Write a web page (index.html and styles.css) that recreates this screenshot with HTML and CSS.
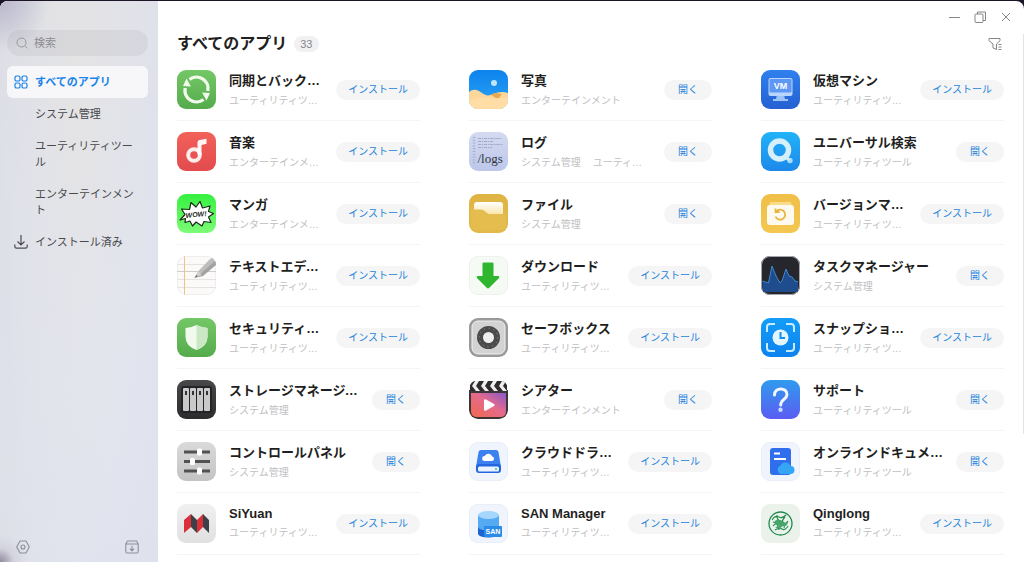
FILE: index.html
```html
<!DOCTYPE html>
<html lang="ja">

<head>
    <meta charset="UTF-8">
    <meta name="viewport" content="width=device-width, initial-scale=1.0">
    <title>すべてのアプリ</title>
    <link rel="stylesheet" href="styles.css">
</head>

<body>
    <div class="window">
        <!-- Sidebar -->
        <aside class="sidebar">
            <label class="search">
                <svg width="12" height="12" viewBox="0 0 12 12" fill="none" stroke="#97979c"><circle cx="5.5" cy="5.5" r="4.5"/><path d="M9 9l2.3 2.3"/></svg>
                <input type="search" placeholder="検索" aria-label="検索">
            </label>
            <nav class="menu">
                <a href="#all" class="menu-item active">
                    <svg width="14" height="14" viewBox="0 0 14 14" fill="none" stroke="#1a83e8" stroke-width="1.2"><rect x="1" y="1" width="5" height="5" rx="1.6"/><rect x="8" y="1" width="5" height="5" rx="1.6"/><rect x="1" y="8" width="5" height="5" rx="1.6"/><rect x="8" y="8" width="5" height="5" rx="1.6"/></svg>
                    <span>すべてのアプリ</span>
                </a>
                <a href="#system" class="menu-item sub">システム管理</a>
                <a href="#utility" class="menu-item sub">ユーティリティツール</a>
                <a href="#entertainment" class="menu-item sub">エンターテインメント</a>
                <a href="#installed" class="menu-item">
                    <svg width="14" height="14" viewBox="0 0 14 14" fill="none" stroke="#4c4c52" stroke-width="1.2"><path d="M7 0v9.5M3.5 6.5L7 10l3.500-3.500M.8 9.500v2q0 1.700 1.700 1.700h9q1.700 0 1.700-1.700v-2"/></svg>
                    <span>インストール済み</span>
                </a>
            </nav>
            <div class="sidebar-footer">
                <button class="icon-btn" aria-label="設定">
                    <svg width="14" height="14" viewBox="0 0 14 14" fill="none" stroke="#8e8e98" stroke-width="1.1"><path d="M4 1h6l3.300 6L10 13H4L.7 7z" stroke-linejoin="round"/><circle cx="7" cy="7" r="2"/></svg>
                </button>
                <button class="icon-btn" aria-label="手動インストール">
                    <svg width="14" height="14" viewBox="0 0 14 14" fill="none" stroke="#8e8e98" stroke-width="1.1"><path d="M2.500 1h9l1.700 3v7.500q0 1.500-1.500 1.500H2.300Q.8 13 .8 11.500V4zM.8 4h12.400M7 5.800v5M4.800 8.700L7 10.900l2.200-2.200" stroke-linejoin="round"/></svg>
                </button>
            </div>
        </aside>

        <main class="main">
            <div class="window-controls">
                <button class="icon-btn" aria-label="最小化"><svg width="12" height="12" viewBox="0 0 12 12" stroke="#85858a"><path d="M1 6.500h11"/></svg></button>
                <button class="icon-btn" aria-label="元に戻す"><svg width="12" height="12" viewBox="0 0 12 12" fill="none" stroke="#85858a"><rect x="1" y="3" width="8" height="8.500" rx="1"/><path d="M3.500 3V1h8v8.500H9"/></svg></button>
                <button class="icon-btn" aria-label="閉じる"><svg width="12" height="12" viewBox="0 0 12 12" stroke="#85858a"><path d="M2 2l8 8M10 2l-8 8"/></svg></button>
            </div>
            <header class="page-head">
                <h1>すべてのアプリ</h1>
                <span class="count">33</span>
                <button class="icon-btn filter" aria-label="絞り込み">
                    <svg width="14" height="14" viewBox="0 0 14 14" fill="none" stroke="#85858a" stroke-linejoin="round"><path d="M1 1.500h11v2.200L8.500 7v5.500L5 11V7L1 3.700zM10.500 7.500h3M10.500 10h3M10.500 12.500h3"/></svg>
                </button>
            </header>

            <ul class="apps">
                <li class="app">
                    <svg class="app-icon green" viewBox="0 0 39 39"><g fill="none" stroke="#f0faea" stroke-width="3.400"><path d="M12.500 9.500A11.500 11.500 0 0 1 30.800 21"/><path d="M26.500 29.500A11.500 11.500 0 0 1 8.200 18"/></g><path d="M25 22.500l8 .5-3.500 7.500zM14 16.500l-8-.5 3.500-7.500z" fill="#f0faea"/></svg>
                    <div class="app-text"><h2>同期とバックアップ</h2><p>ユーティリティツール</p></div>
                    <button class="action">インストール</button>
                </li>
                <li class="app">
                    <svg class="app-icon sky" viewBox="0 0 39 39"><circle cx="25" cy="13" r="3" fill="#bfe7fb"/><path d="M0 22c5-4 9-2 13 1 4 3 7 3 11 1 5-2 10-3 15-1v16H0z" fill="#fbd79b"/><path d="M22 25c5-4 8-1 11-1l-3 4c-3 2-5-2-8-3z" fill="#e9a94e"/><path d="M0 31c12-7 24 0 39-4v12H0z" fill="#ffdda5"/></svg>
                    <div class="app-text"><h2>写真</h2><p>エンターテインメント</p></div>
                    <button class="action">開く</button>
                </li>
                <li class="app">
                    <svg class="app-icon blue" viewBox="0 0 39 39"><path d="M16 25h7l1 4h3v2H12v-2h3z" fill="#9cc4fa"/><rect x="7.500" y="8" width="24" height="18" rx="2" fill="#b9d5fd"/><rect x="8.500" y="9" width="22" height="13.500" rx="1" fill="#5e98f4"/><text x="19.500" y="19" text-anchor="middle" class="vm-label">VM</text></svg>
                    <div class="app-text"><h2>仮想マシン</h2><p>ユーティリティツール</p></div>
                    <button class="action">インストール</button>
                </li>

                <li class="app">
                    <svg class="app-icon red" viewBox="0 0 39 39"><circle cx="17" cy="23" r="5.800" fill="none" stroke="#fff" stroke-width="4" opacity=".9"/><path d="M20.500 22V10.500q0-2 2-2.400l7-1.300v5l-5 1.200V23z" fill="#fff" opacity=".95"/></svg>
                    <div class="app-text"><h2>音楽</h2><p>エンターテインメント</p></div>
                    <button class="action">インストール</button>
                </li>
                <li class="app">
                    <svg class="app-icon paper" viewBox="0 0 39 39"><path d="M5 5v28" stroke="#9fabcf" stroke-width="2.500" stroke-dasharray="1 1.800"/><path d="M9 6.500h24M9 9.500h15M9 12.500h25M9 15.500h14" stroke="#a0abc8" stroke-dasharray="3 .8 1.500 .8"/><text x="8.500" y="31" class="logs-label">/logs</text></svg>
                    <div class="app-text"><h2>ログ</h2><p class="tags"><span>システム管理</span><span>ユーティリティツール</span></p></div>
                    <button class="action">開く</button>
                </li>
                <li class="app">
                    <svg class="app-icon cyan" viewBox="0 0 39 39"><circle cx="18.500" cy="18" r="9" fill="none" stroke="#d5effd" stroke-width="5.500"/><circle cx="29" cy="28.500" r="2.700" fill="#a7dcfb"/><path d="M24 24l4 4" stroke="#d5effd" stroke-width="3"/></svg>
                    <div class="app-text"><h2>ユニバーサル検索</h2><p>ユーティリティツール</p></div>
                    <button class="action">開く</button>
                </li>

                <li class="app">
                    <svg class="app-icon lime" viewBox="0 0 39 39"><path d="M3 26l5-5.500L4.500 15l8 .5 1.500-7 5 4.500 4-5.500 2.500 6.500 7.500-2-1.500 5.500 5 2-5 3.500 2.500 5.500-7-1-2 4.500-6-4-3.500 4-2.500-5-5 1.500.5-4z" fill="#fff" stroke="#1c2b1c" stroke-width="1.200" stroke-linejoin="round"/><text x="19" y="23" text-anchor="middle" class="wow-label" transform="rotate(-5 19 20)">WOW!</text></svg>
                    <div class="app-text"><h2>マンガ</h2><p>エンターテインメント</p></div>
                    <button class="action">インストール</button>
                </li>
                <li class="app">
                    <svg class="app-icon folder" viewBox="0 0 39 39"><defs><linearGradient id="tab" x1="0" y1="0" x2="0" y2="1"><stop offset="0" stop-color="#fff"/><stop offset="1" stop-color="#fae5a6"/></linearGradient></defs><path d="M5 17v-6q0-3 3-3h23q3 0 3 3v10H5z" fill="url(#tab)"/><path d="M2 15.500h9c3 0 4 1 6 2.800 1.500 1.400 2.500 1.700 5 1.700h15v12q0 4-5 4H7q-5 0-5-4z" fill="#e5bd4e"/></svg>
                    <div class="app-text"><h2>ファイル</h2><p>システム管理</p></div>
                    <button class="action">開く</button>
                </li>
                <li class="app">
                    <svg class="app-icon yellow" viewBox="0 0 39 39"><rect x="8.500" y="8" width="22" height="9" rx="2" fill="#f9dd8b"/><rect x="6" y="11" width="27" height="20" rx="3" fill="#fffaf0"/><path d="M15.300 17.500a5 5 0 1 1-.8 5M14.500 14.500v3.500h4" fill="none" stroke="#e9b53a" stroke-width="1.800"/></svg>
                    <div class="app-text"><h2>バージョンマネージャー</h2><p>ユーティリティツール</p></div>
                    <button class="action">インストール</button>
                </li>

                <li class="app">
                    <svg class="app-icon note" viewBox="0 0 39 39"><path d="M0 8.500h39M0 23.500h39M0 31.500h39" stroke="#e5e3e1"/><path d="M0 15.500h39" stroke="#cfcdcb"/><path d="M7.500 0v39" stroke="#f0c484"/><path d="M17.500 22l4-7L33 3q3-2 6-1v5L26 19z" fill="#bdbdbd"/><path d="M17.500 22l6-4L39 4v5L26 20z" fill="#a2a2a2"/><path d="M17.500 22l4-7 3 4z" fill="#d0d0d0"/><path d="M17.500 22l2-3 1.500 1z" fill="#666"/></svg>
                    <div class="app-text"><h2>テキストエディター</h2><p>ユーティリティツール</p></div>
                    <button class="action">インストール</button>
                </li>
                <li class="app">
                    <svg class="app-icon pale-green" viewBox="0 0 39 39"><path d="M13.500 7.500q0-1 1-1h9q1 0 1 1v12.500H29.500q1.500.5.500 2L20 32q-1 .8-2 0L8 22q-1-1.500.5-2h5z" fill="#2fb62f"/></svg>
                    <div class="app-text"><h2>ダウンロード</h2><p>ユーティリティツール</p></div>
                    <button class="action">インストール</button>
                </li>
                <li class="app">
                    <svg class="app-icon dark-task" viewBox="0 0 39 39"><path d="M1.500 25l3 1 3 1 3.500-17 4 10 4 7 2-2 4-12 3 7 3 1 3 4 3 1v10H1.500z" fill="#1e4c8c"/><path d="M1.500 25l3 1 3 1 3.500-17 4 10 4 7 2-2 4-12 3 7 3 1 3 4 3 1" fill="none" stroke="#4089cf"/></svg>
                    <div class="app-text"><h2>タスクマネージャー</h2><p>システム管理</p></div>
                    <button class="action">開く</button>
                </li>

                <li class="app">
                    <svg class="app-icon green" viewBox="0 0 39 39"><path d="M19.500 7q6 3 11 3v9q0 9-11 13Q8.500 28 8.500 19v-9q5 0 11-3z" fill="#f2faee"/><path d="M19.500 7q6 3 11 3v9q0 9-11 13z" fill="#cbe8c4"/></svg>
                    <div class="app-text"><h2>セキュリティマネージャー</h2><p>ユーティリティツール</p></div>
                    <button class="action">インストール</button>
                </li>
                <li class="app">
                    <svg class="app-icon safe" viewBox="0 0 39 39"><rect x="3" y="3" width="33" height="33" rx="6" fill="#d3d3d3" stroke="#f0f0f0"/><circle cx="19.500" cy="19.500" r="8.500" fill="#eee" stroke="#4b4b4b" stroke-width="6"/><circle cx="19.500" cy="19.500" r="9.300" fill="none" stroke="#999" stroke-dasharray="1 3.870"/></svg>
                    <div class="app-text"><h2>セーフボックス</h2><p>ユーティリティツール</p></div>
                    <button class="action">インストール</button>
                </li>
                <li class="app">
                    <svg class="app-icon azure" viewBox="0 0 39 39"><path d="M6 14V9q0-3 3-3h5M25 6h5q3 0 3 3v5M33 25v5q0 3-3 3h-5M14 33H9q-3 0-3-3v-5" fill="none" stroke="#c9ecff" stroke-width="2"/><circle cx="19.500" cy="19.500" r="8" fill="#e3f5ff"/><path d="M19.500 14v6H24" fill="none" stroke="#128ef0" stroke-width="2"/></svg>
                    <div class="app-text"><h2>スナップショット</h2><p>ユーティリティツール</p></div>
                    <button class="action">インストール</button>
                </li>

                <li class="app">
                    <svg class="app-icon dark" viewBox="0 0 39 39"><rect x="4" y="6" width="31" height="27" rx="3" fill="#242426"/><g fill="#c9c9c9"><rect x="6" y="8" width="6" height="23" rx="1"/><rect x="13" y="8" width="6" height="23" rx="1"/><rect x="20" y="8" width="6" height="23" rx="1"/><rect x="27" y="8" width="6" height="23" rx="1"/></g><path d="M9 11v4M16 11v4M23 11v4M30 11v4" stroke="#333" stroke-width="2"/></svg>
                    <div class="app-text"><h2>ストレージマネージャー</h2><p>システム管理</p></div>
                    <button class="action">開く</button>
                </li>
                <li class="app">
                    <svg class="app-icon" viewBox="0 0 39 39"><defs><linearGradient id="film" x1="0" y1="1" x2="1" y2="0"><stop offset="0" stop-color="#f2684c"/><stop offset=".55" stop-color="#e46a8d"/><stop offset="1" stop-color="#8858c9"/></linearGradient></defs><rect y="9" width="39" height="30" rx="8" fill="#3c3436"/><path d="M0 10h39v14H0z" fill="#3c3436"/><path d="M2 13h35v18q0 6-6 6H8q-6 0-6-6z" fill="url(#film)"/><path d="M1 3q0-2 2-2h33q2 0 2 2v8H1z" fill="#302c2d"/><path d="M6 1h4L7 6l4 5H7L3 6zM15 1h4l-3 5 4 5h-4l-4-5zM24 1h4l-3 5 4 5h-4l-4-5zM33 1h4l-3 5 4 5h-4l-4-5z" fill="#eee"/><path d="M15 20.500q0-2 2-1l8 4.500q1.500 1 0 2l-8 4.500q-2 1-2-1z" fill="#fff"/></svg>
                    <div class="app-text"><h2>シアター</h2><p>エンターテインメント</p></div>
                    <button class="action">開く</button>
                </li>
                <li class="app">
                    <svg class="app-icon support" viewBox="0 0 39 39"><path d="M13.500 15c0-8 12.500-8 12.500-.5 0 5-6.300 5-6.300 10.500" fill="none" stroke="#f2f6ff" stroke-width="3" stroke-linecap="round"/><circle cx="19.500" cy="29.800" r="2.200" fill="#c9d8ff"/></svg>
                    <div class="app-text"><h2>サポート</h2><p>ユーティリティツール</p></div>
                    <button class="action">開く</button>
                </li>

                <li class="app">
                    <svg class="app-icon silver" viewBox="0 0 39 39"><path d="M7 10h26M7 19.500h26M7 29h26" stroke="#525252" stroke-width="3"/><g fill="#fff"><rect x="20" y="6.500" width="5" height="7" rx="1.500"/><rect x="13" y="16" width="5" height="7" rx="1.500"/><rect x="20" y="25.500" width="5" height="7" rx="1.500"/></g></svg>
                    <div class="app-text"><h2>コントロールパネル</h2><p>システム管理</p></div>
                    <button class="action">開く</button>
                </li>
                <li class="app">
                    <svg class="app-icon pale-blue" viewBox="0 0 39 39"><path d="M12 8h15q2 0 2.500 2L32 25H7l2.500-15Q10 8 12 8z" fill="#3b82f0"/><rect x="7" y="22" width="25" height="9" rx="3" fill="#2366df"/><rect x="9" y="24.500" width="21" height="5" rx="1.500" fill="#eaf3ff"/><circle cx="27" cy="27" r="1" fill="#4bc282"/><path d="M15.500 19a2.500 2.500 0 0 1 .3-5 4 4 0 0 1 7.400.5 2.300 2.300 0 0 1 0 4.500z" fill="#fff"/></svg>
                    <div class="app-text"><h2>クラウドドライブ</h2><p>ユーティリティツール</p></div>
                    <button class="action">インストール</button>
                </li>
                <li class="app">
                    <svg class="app-icon pale-blue" viewBox="0 0 39 39"><rect x="9" y="6" width="21" height="27" rx="3" fill="#2f6fee"/><path d="M13 11.500h6M13 17h12" stroke="#fff" stroke-width="2"/><path d="M20 32a4.500 4.500 0 0 1-.5-8.500 5.500 5.500 0 0 1 10 .5 4 4 0 0 1 0 8z" fill="#35a5f4"/></svg>
                    <div class="app-text"><h2>オンラインドキュメント</h2><p>ユーティリティツール</p></div>
                    <button class="action">開く</button>
                </li>

                <li class="app">
                    <svg class="app-icon light" viewBox="0 0 39 39"><path d="M7 16l7-6v13l-7 6zM20 16l6-6v13l-6 6z" fill="#dc3038"/><path d="M14 10l6 6v13l-6-6zM26 10l6 6v13l-6-6z" fill="#3d4048"/></svg>
                    <div class="app-text"><h2>SiYuan</h2><p>ユーティリティツール</p></div>
                    <button class="action">インストール</button>
                </li>
                <li class="app">
                    <svg class="app-icon pale-blue" viewBox="0 0 39 39"><path d="M9 21h21v9a10.500 3.500 0 0 1-21 0z" fill="#1d63d2"/><path d="M9 11h21v12a10.500 3.500 0 0 1-21 0z" fill="#55aaf2"/><ellipse cx="19.500" cy="11" rx="10.500" ry="4" fill="#a5d6fb"/><rect x="15" y="22" width="18" height="11" rx="1" fill="#2b8be9"/><text x="24" y="30" text-anchor="middle" class="san-label">SAN</text></svg>
                    <div class="app-text"><h2>SAN Manager</h2><p>ユーティリティツール</p></div>
                    <button class="action">インストール</button>
                </li>
                <li class="app">
                    <svg class="app-icon mint" viewBox="0 0 39 39"><g fill="none" stroke="#218a4e"><circle cx="19.500" cy="19.500" r="11.500" stroke-width="1.300"/><path d="M11 16q3-5 7-3 3 2 7-2M12 22q3-4 7-2 5 2 8-3M14 26q4-3 7-1t6-3M16 11q-1 5 4 6t3 7M24 13q-4 4-3 9M12 18q5 1 6 8" stroke-width="1.100"/></g><path d="M13 18q3-4 7-1 3 3 7 1-1 5-5 4-4 4-8 1 3 0 4-2-3 1-5-3z" fill="#45a56b"/></svg>
                    <div class="app-text"><h2>Qinglong</h2><p>ユーティリティツール</p></div>
                    <button class="action">インストール</button>
                </li>
            </ul>
            <div class="scroll-thumb"></div>
        </main>
    </div>
</body>

</html>
```
FILE: styles.css
```css
* {
    box-sizing: border-box;
}

body {
    margin: 0;
    padding-top: 1px;
    height: 100vh;
    overflow: hidden;
    background: #1c1526;
    color: #1f1f22;
    font-family: "Liberation Sans", "Noto Sans CJK JP", sans-serif;
    font-size: 11px;
}

button,
input {
    font-family: inherit;
}

.window {
    display: flex;
    height: 100%;
    border-radius: 8px 8px 0 0;
    overflow: hidden;
    background: #fff;
}

.icon-btn {
    display: flex;
    padding: 0;
    border: none;
    background: none;
    cursor: pointer;
}

/* Sidebar */
.sidebar {
    display: flex;
    flex-direction: column;
    flex: none;
    width: 158px;
    padding: 29px 10px 8px 7px;
    background:
        radial-gradient(circle at 0 100%, #8f899f 0, rgba(200, 198, 210, 0.5) 14px, transparent 28px),
        radial-gradient(circle at 0 0, #b9b8cc 0, transparent 50px),
        radial-gradient(ellipse at 50% 12%, rgba(229, 228, 226, 0.8) 0, transparent 80px),
        radial-gradient(ellipse at 60% 60%, #e2e5f1 0, transparent 180px),
        linear-gradient(100deg, #dadbe0 0, #dedfe6 60%, #dcdde8 100%);
}

.search {
    display: flex;
    align-items: center;
    gap: 6px;
    height: 26px;
    padding: 0 9px;
    border-radius: 13px;
    background: rgba(120, 120, 130, 0.1);
}

.search svg {
    flex: none;
}

.search input {
    width: 100%;
    min-width: 0;
    padding: 0;
    border: none;
    outline: none;
    background: none;
    font-size: 11px;
}

.search input::placeholder {
    color: #8c8c92;
}

.menu {
    margin-top: 10px;
}

.menu-item {
    display: flex;
    align-items: center;
    gap: 7px;
    padding: 8px 7px;
    border-radius: 6px;
    color: #48484d;
    line-height: 16px;
    text-decoration: none;
}

.menu-item.sub {
    padding-left: 28px;
}

.menu-item.active {
    background: #f7f7fa;
    color: #1a83e8;
    font-weight: bold;
}

.sidebar-footer {
    display: flex;
    justify-content: space-between;
    margin-top: auto;
    padding: 0 9px;
}

/* Main area */
.main {
    position: relative;
    flex: 1;
    min-width: 0;
    padding: 0 20px 0 19px;
}

.window-controls {
    display: flex;
    justify-content: flex-end;
    gap: 14px;
    height: 31px;
    padding-top: 10px;
    margin-right: -8px;
}

.page-head {
    display: flex;
    align-items: center;
    height: 24px;
    margin-bottom: 3px;
}

.page-head h1 {
    margin: 0;
    font-size: 16px;
    line-height: 24px;
}

.count {
    margin-left: 7px;
    padding: 0 6px;
    border-radius: 8px;
    background: #f1f1f3;
    color: #88888c;
    line-height: 16px;
}

.filter {
    margin-right: 2px;
    margin-left: auto;
}

.apps {
    display: grid;
    grid-template-columns: repeat(3, minmax(0, 1fr));
    column-gap: 49px;
    margin: 0;
    padding: 0;
    list-style: none;
}

.app {
    display: flex;
    align-items: center;
    height: 62px;
    border-bottom: 1px solid #f4f4f5;
}

.app-icon {
    flex: none;
    width: 39px;
    height: 39px;
    margin-right: 13px;
    border-radius: 9px;
}

.app-text {
    flex: 1;
    min-width: 0;
    padding-bottom: 2px;
}

.app-text h2,
.app-text p {
    margin: 0;
    overflow: hidden;
    white-space: nowrap;
    text-overflow: ellipsis;
}

.app-text h2 {
    margin-bottom: 3px;
    font-size: 13px;
}

.app-text p {
    color: #c0c0c3;
    font-size: 10px;
}

.tags span + span {
    margin-left: 12px;
}

.action {
    flex: none;
    min-width: 48px;
    height: 20px;
    margin-left: 12px;
    padding: 0 12px;
    border: none;
    border-radius: 10px;
    background: #f5f5f6;
    color: #2384dc;
    font-size: 10px;
    line-height: 20px;
    cursor: pointer;
}

.scroll-thumb {
    position: absolute;
    top: 33px;
    right: 0;
    width: 1px;
    height: 400px;
    background: #e4e4e6;
}

/* Icon backgrounds */
.green { background: linear-gradient(#74c767, #55ab4c); }
.sky { background: linear-gradient(#0c83ec, #2ea5f5); }
.blue { background: linear-gradient(#2f80ee, #2560d2); }
.red { background: linear-gradient(#f2615a, #e34b4e); }
.paper { background: linear-gradient(#d4daf0, #bcc7ea); }
.cyan { background: linear-gradient(#22b3f8, #1d88ea); }
.lime { background: linear-gradient(#35f03f, #7dfc77); }
.folder { background: linear-gradient(#dfb444, #e3ba4a); }
.yellow { background: linear-gradient(#f0bf48, #f3c750); }
.note { background: #fbfaf9; box-shadow: inset 0 0 0 1px #eee; }
.pale-green { background: #f5faf5; box-shadow: inset 0 0 0 1px #edf2ed; }
.dark-task { background: #25272d; box-shadow: inset 0 0 0 1px #a5a5ae; }
.safe { background: #9a9a9a; }
.azure { background: linear-gradient(#149df8, #0c82ee); }
.dark { background: linear-gradient(#48484a, #2c2c2e); }
.support { background: linear-gradient(#2f9bee, #5b5cf2); }
.silver { background: linear-gradient(#dadada, #c3c3c3); }
.pale-blue { background: #eff4fd; box-shadow: inset 0 0 0 1px #e9eef8; }
.light { background: linear-gradient(#f0f0f0, #e0e0e0); }
.mint { background: #eaf2eb; }

/* Lettering inside the icons */
.vm-label {
    fill: #fff;
    font-size: 9px;
    font-weight: bold;
}

.logs-label {
    fill: #2f3340;
    font-family: "Liberation Serif", serif;
    font-size: 13px;
}

.wow-label {
    fill: #1c2b1c;
    font-size: 7px;
    font-style: italic;
    font-weight: bold;
}

.san-label {
    fill: #fff;
    font-size: 7px;
    font-weight: bold;
}
```
